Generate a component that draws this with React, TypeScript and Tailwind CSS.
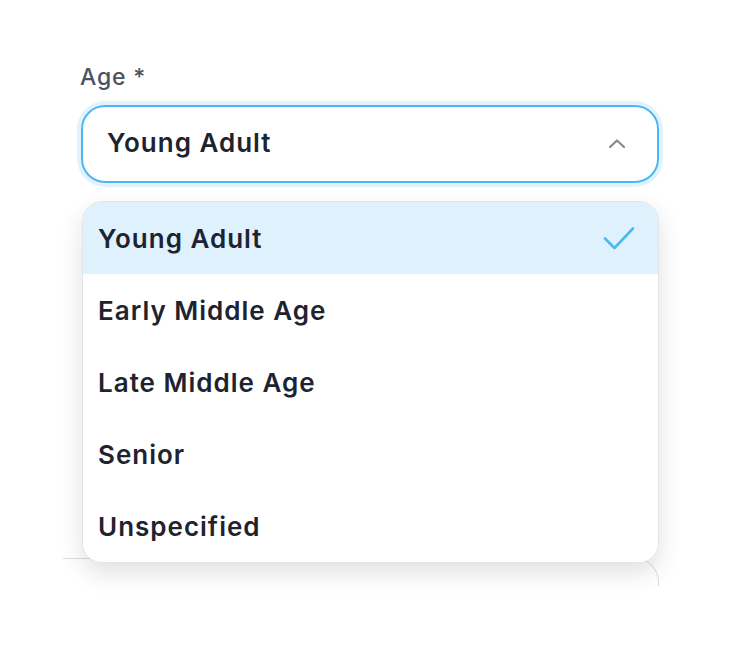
import React from "react";

const options = [
  "Young Adult",
  "Early Middle Age",
  "Late Middle Age",
  "Senior",
  "Unspecified",
];

const ChevronUp: React.FC = () => (
  <svg width="20" height="12" viewBox="0 0 20 12" fill="none">
    <path
      d="M3 10L10 3.5L17 10"
      stroke="#8a8a8e"
      strokeWidth="2.2"
      strokeLinecap="round"
      strokeLinejoin="round"
    />
  </svg>
);

const Check: React.FC = () => (
  <svg width="34" height="28" viewBox="0 0 34 28" fill="none">
    <path
      d="M3 14.5L12.5 24L31 4.5"
      stroke="#4fb8f0"
      strokeWidth="2.6"
      strokeLinecap="round"
      strokeLinejoin="round"
    />
  </svg>
);

const App: React.FC = () => {
  const selected = options[0];
  return (
    <div
      className="min-h-[651px] bg-white pt-[61px] pl-[63px] pr-[77px]"
      style={{ fontFamily: "Inter, 'Noto Sans', sans-serif" }}
    >
      <div className="pl-[17px]">
        <label className="block text-[23px] leading-[32px] font-medium tracking-[0.8px] text-[#4b5260]">
          Age *
        </label>
        <div className="relative mt-[12px] pl-[1px]">
          <button className="flex h-[78px] w-full items-center justify-between rounded-[24px] border-2 border-[#4cb8f2] bg-white pb-[3px] pl-[24px] pr-[30px] shadow-[0_0_0_4px_#e3f3fd]">
            <span className="text-[26px] font-semibold tracking-[1px] text-[#1e2330]">
              {selected}
            </span>
            <ChevronUp />
          </button>

          <ul className="absolute left-[2px] top-[96px] z-10 w-[577px] overflow-hidden rounded-[20px] border border-[#e2e4e8] bg-white shadow-[0_10px_24px_rgba(0,0,0,0.12)]">
            {options.map((o) => (
              <li
                key={o}
                className={`flex h-[72px] items-center justify-between pl-[15px] pr-[22px] text-[26px] font-semibold tracking-[1px] text-[#1e2330] ${
                  o === selected ? "bg-[#def1fc]" : "bg-white"
                }`}
              >
                <span>{o}</span>
                {o === selected && <Check />}
              </li>
            ))}
          </ul>
        </div>
      </div>

      <div className="mt-[375px] h-[28px] rounded-tr-[24px] border-t border-r border-[#dcdde1]" />
    </div>
  );
};

export default App;
